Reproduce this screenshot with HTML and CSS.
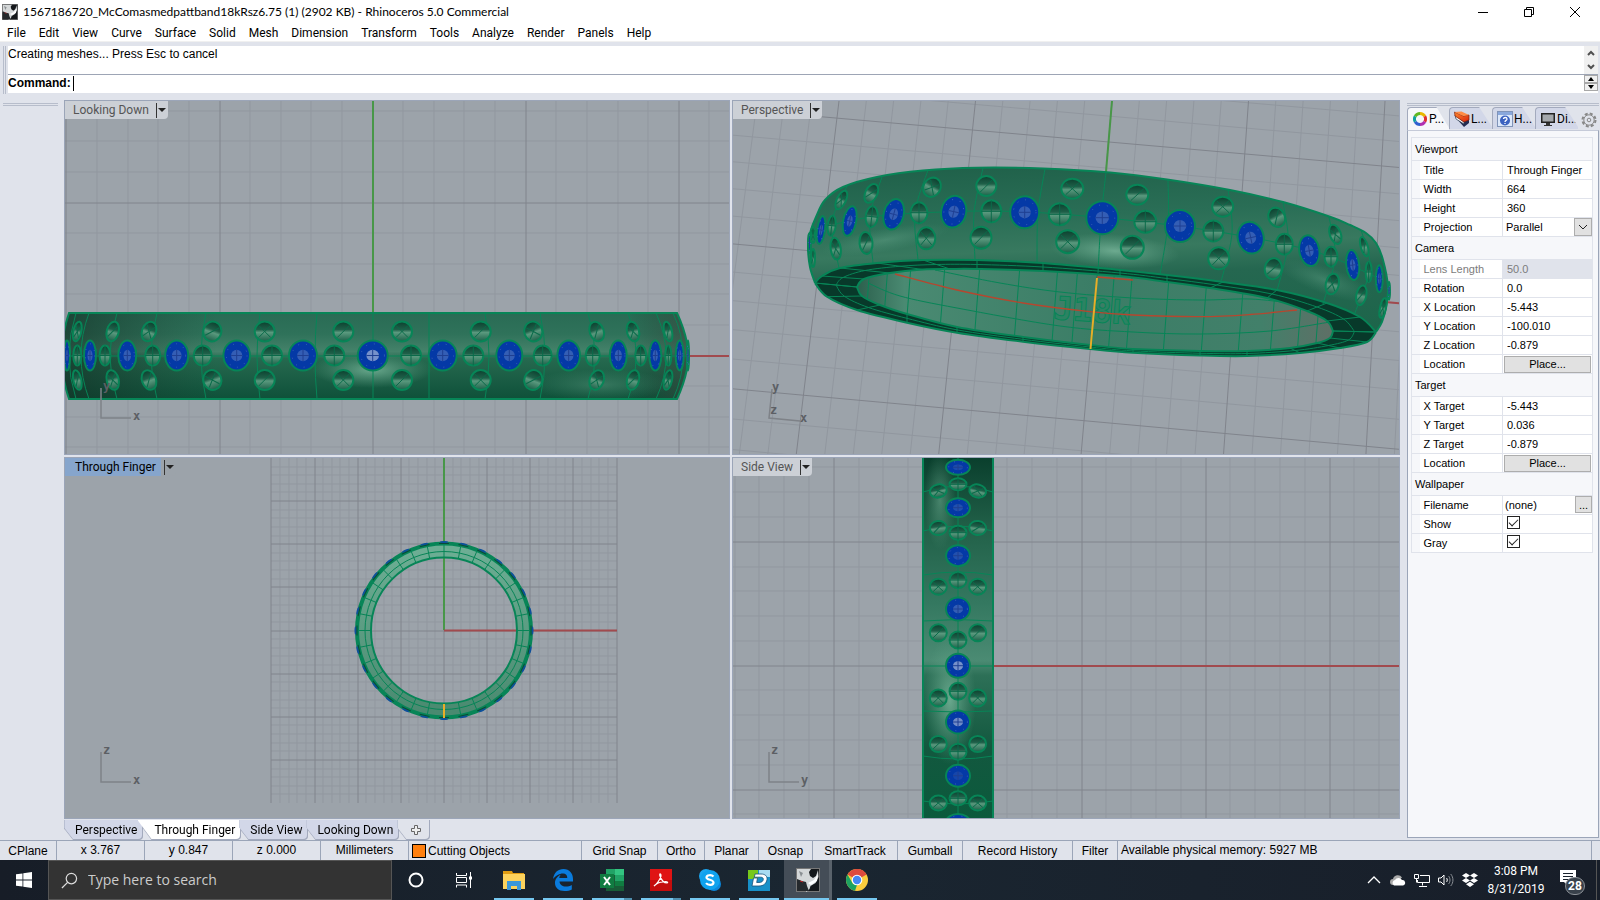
FILE: index.html
```html
<!DOCTYPE html>
<html lang="en">
<head>
<meta charset="utf-8">
<title>Rhinoceros 5.0 Commercial</title>
<link rel="stylesheet" href="styles.css">
</head>
<body>
<svg class="defs" width="0" height="0" aria-hidden="true">
  <defs>
    <linearGradient id="hole" x1="0" y1="0" x2="0" y2="1">
      <stop offset="0" stop-color="#0c3f2e"/><stop offset=".4" stop-color="#1f6049"/><stop offset=".55" stop-color="#5a997e"/><stop offset="1" stop-color="#1c6048"/>
    </linearGradient>
    <linearGradient id="band" x1="0" y1="0" x2="0" y2="1">
      <stop offset="0" stop-color="#296b54"/><stop offset=".25" stop-color="#2f725a"/><stop offset=".45" stop-color="#45826a"/><stop offset=".53" stop-color="#26694f"/><stop offset="1" stop-color="#0e5039"/>
    </linearGradient>
    <linearGradient id="ends" x1="0" y1="0" x2="1" y2="0">
      <stop offset="0" stop-color="#122820" stop-opacity=".6"/><stop offset=".25" stop-color="#17382c" stop-opacity="0"/><stop offset=".9" stop-color="#17382c" stop-opacity="0"/><stop offset="1" stop-color="#40453e" stop-opacity=".6"/>
    </linearGradient>
    <radialGradient id="glow"><stop offset="0" stop-color="#76b398" stop-opacity=".85"/><stop offset="1" stop-color="#5d9f84" stop-opacity="0"/></radialGradient>
    <linearGradient id="side" x1="0" y1="0" x2="0" y2="1">
      <stop offset="0" stop-color="#0a3f2d"/><stop offset=".2" stop-color="#226149"/><stop offset=".4" stop-color="#347860"/><stop offset=".56" stop-color="#4b8b73"/><stop offset=".6" stop-color="#2d7057"/><stop offset=".8" stop-color="#13583f"/><stop offset="1" stop-color="#0b5a3c"/>
    </linearGradient>
    <linearGradient id="ring" x1="0" y1="0" x2="0" y2="1"><stop offset="0" stop-color="#6dae94"/><stop offset="1" stop-color="#4a8a70"/></linearGradient>
    <linearGradient id="outer" x1="0" y1="0" x2=".12" y2="1">
      <stop offset="0" stop-color="#1f6049"/><stop offset=".3" stop-color="#2a6e56"/><stop offset=".48" stop-color="#38795f"/><stop offset=".62" stop-color="#256750"/><stop offset="1" stop-color="#1c654a"/>
    </linearGradient>
    <linearGradient id="inner" x1="0" y1="0" x2="1" y2="0">
      <stop offset="0" stop-color="#2c604d"/><stop offset=".1" stop-color="#4a8a72"/><stop offset=".5" stop-color="#3b7d66"/><stop offset=".85" stop-color="#42806a"/><stop offset="1" stop-color="#5f6f66"/>
    </linearGradient>
    <linearGradient id="cone" x1="0" y1="0" x2="1" y2="1"><stop offset="0" stop-color="#ff8a30"/><stop offset="1" stop-color="#d8230c"/></linearGradient>
  </defs>
  <symbol id="rhino" viewBox="0 0 24 24">
    <rect width="24" height="24" fill="#15181b"/><rect x=".5" y=".5" width="23" height="23" fill="none" stroke="#777"/>
    <path d="M1 1h14l-2 3 1 4 3 2 3-2 2-6 .5 7-3 6-5 3-1 3-3 3-3-5-4-3-2.500-4z" fill="#d4d7d8"/>
    <path d="M1 11l5 2 4 1 1 4 2 5H1z" fill="#25292c"/><path d="M3 3l4 2-2 4z" fill="#8b9093"/><path d="M12 15l6-3 4-6-1 7-6 4z" fill="#fff"/><path d="M4 13l3 1" stroke="#b22"/>
  </symbol>
</svg>

<header class="titlebar">
  <svg class="app-icon" viewBox="0 0 24 24"><use href="#rhino"/></svg>
  <h1>1567186720_McComasmedpattband18kRsz6.75 (1) (2902 KB) - Rhinoceros 5.0 Commercial</h1>
  <div class="window-buttons">
    <button aria-label="Minimize"><svg viewBox="0 0 12 12"><path d="M1 6.500h10"/></svg></button>
    <button aria-label="Restore"><svg viewBox="0 0 12 12"><path d="M1.500 3.500h7v7h-7zM3.500 3.500v-2h7v7h-2"/></svg></button>
    <button aria-label="Close"><svg viewBox="0 0 12 12"><path d="M1 1l10 10M11 1L1 11"/></svg></button>
  </div>
</header>
<nav class="menu" aria-label="Main menu">
  <button>File</button><button>Edit</button><button>View</button><button>Curve</button><button>Surface</button><button>Solid</button><button>Mesh</button><button>Dimension</button><button>Transform</button><button>Tools</button><button>Analyze</button><button>Render</button><button>Panels</button><button>Help</button>
</nav>

<section class="command">
  <div class="grip-v"></div>
  <div class="command-body">
    <div class="history"><p>Creating meshes... Press Esc to cancel</p>
      <div class="scroll"><button aria-label="Scroll up"><svg viewBox="0 0 8 6"><path d="M1 5l3-3 3 3"/></svg></button><button aria-label="Scroll down"><svg viewBox="0 0 8 6"><path d="M1 1l3 3 3-3"/></svg></button></div>
    </div>
    <div class="prompt"><label for="cmd">Command:</label><span class="caret"></span><input id="cmd" type="text">
      <div class="spin"><button aria-label="Previous"><svg viewBox="0 0 8 6"><path d="M1 5l3-4 3 4z"/></svg></button><button aria-label="Next"><svg viewBox="0 0 8 6"><path d="M1 1l3 4 3-4z"/></svg></button></div>
    </div>
  </div>
</section>

<main class="workspace">
  <aside class="toolbox"><div class="grip-h"></div></aside>
  <div class="center">
    <div class="views">
      <section class="view"><svg id="v-top" class="scene" viewBox="65 101 664 353" preserveAspectRatio="xMinYMin slice"></svg>
        <button class="view-title">Looking Down<i></i><b></b></button></section>
      <section class="view"><svg id="v-persp" class="scene" viewBox="733 101 666 353" preserveAspectRatio="xMinYMin slice"></svg>
        <button class="view-title">Perspective<i></i><b></b></button></section>
      <section class="view"><svg id="v-front" class="scene" viewBox="65 458 664 360" preserveAspectRatio="xMinYMin slice"></svg>
        <button class="view-title active"><span>Through Finger</span><i></i><b></b></button></section>
      <section class="view"><svg id="v-side" class="scene" viewBox="733 458 666 360" preserveAspectRatio="xMinYMin slice"></svg>
        <button class="view-title">Side View<i></i><b></b></button></section>
    </div>
    <div class="view-tabs">
      <button>Perspective</button><button class="current">Through Finger</button><button>Side View</button><button>Looking Down</button><button class="add" aria-label="New viewport"><svg viewBox="0 0 10 10"><path d="M3.500 .5h3v3h3v3h-3v3h-3v-3h-3v-3h3z"/></svg></button>
    </div>
  </div>
  <aside class="side">
    <div class="grip-h"></div>
    <div class="panel-tabs">
      <button class="current"><svg viewBox="0 0 16 16" fill="none" stroke-width="3"><path d="M8 2.500a5.500 5.500 0 0 1 4.800 2.800" stroke="#e8b800"/><path d="M12.800 5.300a5.500 5.500 0 0 1 0 5.400" stroke="#e03030"/><path d="M12.800 10.700A5.500 5.500 0 0 1 8 13.500" stroke="#b030b0"/><path d="M8 13.500a5.500 5.500 0 0 1-4.800-2.800" stroke="#3060d0"/><path d="M3.200 10.700a5.500 5.500 0 0 1 0-5.400" stroke="#10a0a0"/><path d="M3.200 5.300A5.500 5.500 0 0 1 8 2.500" stroke="#60b820"/></svg>P...</button>
      <button><svg viewBox="0 0 16 16"><path d="M1 6l9 10 5-4V6l-5 3z" fill="#232c52"/><path d="M1 4l9 7v2L2 8z" fill="#fff" stroke="#345" stroke-width=".7"/><path d="M.5 1l9 4 5.500-1v5l-5 2-9-6z" fill="url(#cone)" stroke="#7b2010" stroke-width=".7"/><path d="M.5 1l7-.5L15 4l-5.500 1z" fill="#ff8b45"/></svg>L...</button>
      <button><svg viewBox="0 0 16 16"><rect x=".5" y=".5" width="15" height="15" fill="#dce8fa" stroke="#8094b8"/><path d="M1 1h14v3H1z" fill="#8aa8dc"/><circle cx="8" cy="9.500" r="5" fill="#3b62c0"/><path d="M6.500 8c0-2 3.500-2 3.500 0 0 1.500-2 1.200-2 3M8 12v1" stroke="#fff" stroke-width="1.300" fill="none"/></svg>H...</button>
      <button><svg viewBox="0 0 16 16"><rect x="1" y="2" width="14" height="10" fill="#222"/><rect x="2.500" y="3.500" width="11" height="7" fill="#a4a8ac"/><path d="M6 12h4v2h2v1H4v-1h2z" fill="#333"/></svg>Di...</button>
      <button class="gear" aria-label="Panel options"><svg viewBox="0 0 16 16" fill="none" stroke="#888"><circle cx="8" cy="8" r="6.500" stroke-width="2" stroke-dasharray="3 2.100"/><circle cx="8" cy="8" r="5.200"/><circle cx="8" cy="8" r="1.800"/></svg></button>
    </div>
    <div class="panel">
      <table class="props">
        <colgroup><col class="c-gutter"><col class="c-label"><col></colgroup>
        <tbody>
        <tr class="group"><th colspan="3" scope="rowgroup">Viewport</th></tr>
        <tr><td></td><th><label for="p1">Title</label></th><td><input id="p1" value="Through Finger"></td></tr>
        <tr><td></td><th><label for="p2">Width</label></th><td><input id="p2" value="664"></td></tr>
        <tr><td></td><th><label for="p3">Height</label></th><td><input id="p3" value="360"></td></tr>
        <tr><td></td><th><label for="p4">Projection</label></th><td><div class="drop"><select id="p4"><option>Parallel</option></select><svg viewBox="0 0 10 6"><path d="M1 1l4 4 4-4"/></svg></div></td></tr>
        </tbody><tbody>
        <tr class="group"><th colspan="3" scope="rowgroup">Camera</th></tr>
        <tr class="off"><td></td><th><label for="p5">Lens Length</label></th><td><input id="p5" value="50.0" disabled></td></tr>
        <tr><td></td><th><label for="p6">Rotation</label></th><td><input id="p6" value="0.0"></td></tr>
        <tr><td></td><th><label for="p7">X Location</label></th><td><input id="p7" value="-5.443"></td></tr>
        <tr><td></td><th><label for="p8">Y Location</label></th><td><input id="p8" value="-100.010"></td></tr>
        <tr><td></td><th><label for="p9">Z Location</label></th><td><input id="p9" value="-0.879"></td></tr>
        <tr><td></td><th><label for="p10">Location</label></th><td><button id="p10" class="place">Place...</button></td></tr>
        </tbody><tbody>
        <tr class="group"><th colspan="3" scope="rowgroup">Target</th></tr>
        <tr><td></td><th><label for="p11">X Target</label></th><td><input id="p11" value="-5.443"></td></tr>
        <tr><td></td><th><label for="p12">Y Target</label></th><td><input id="p12" value="0.036"></td></tr>
        <tr><td></td><th><label for="p13">Z Target</label></th><td><input id="p13" value="-0.879"></td></tr>
        <tr><td></td><th><label for="p14">Location</label></th><td><button id="p14" class="place">Place...</button></td></tr>
        </tbody><tbody>
        <tr class="group"><th colspan="3" scope="rowgroup">Wallpaper</th></tr>
        <tr><td></td><th><label for="p15">Filename</label></th><td><div class="file"><input id="p15" value="(none)"><button aria-label="Browse">...</button></div></td></tr>
        <tr><td></td><th><label for="p16">Show</label></th><td><input id="p16" type="checkbox" checked></td></tr>
        <tr><td></td><th><label for="p17">Gray</label></th><td><input id="p17" type="checkbox" checked></td></tr>
        </tbody>
      </table>
    </div>
  </aside>
</main>

<footer class="status">
  <button>CPlane</button><span>x 3.767</span><span>y 0.847</span><span>z 0.000</span><span>Millimeters</span>
  <button class="layer"><i></i>Cutting Objects</button>
  <button>Grid Snap</button><button>Ortho</button><button>Planar</button><button>Osnap</button><button>SmartTrack</button><button>Gumball</button><button>Record History</button><button>Filter</button>
  <span class="memory">Available physical memory: 5927 MB</span><span></span>
</footer>

<div class="taskbar">
  <button class="start" aria-label="Start"><svg viewBox="0 0 16 16" fill="#fff"><path d="M0 2.300l6.500-.9v6.200H0zM7.300 1.300L16 0v7.600H7.300zM0 8.400h6.500v6.200L0 13.700zM7.300 8.400H16V16l-8.700-1.300z"/></svg></button>
  <label class="search"><svg viewBox="0 0 18 18"><circle cx="11" cy="7" r="5.500"/><path d="M7 11l-6 6"/></svg><input type="text" placeholder="Type here to search" aria-label="Search"></label>
  <div class="apps">
    <button aria-label="Cortana"><svg viewBox="0 0 24 24"><circle cx="12" cy="12" r="6.500" fill="none" stroke="#fff" stroke-width="2"/></svg></button>
    <button aria-label="Task View"><svg viewBox="0 0 24 24" fill="none" stroke="#fff"><path d="M3.500 5v2.500h10V5M3.500 19.500V17h10v2.500M3.500 9.500h10v5h-10zM17.500 4v16"/><path d="M16 8.500h3v3h-3z" fill="#fff" stroke="none"/></svg></button>
    <button class="open" aria-label="File Explorer"><svg viewBox="0 0 24 24"><path d="M1 3h9l1 2h11v4H1z" fill="#e09c12"/><path d="M1 6h22v15H1z" fill="#fcd25c"/><path d="M5 22v-9h14v9h-4v-4H9v4z" fill="#3b97d9"/></svg></button>
    <button class="open" aria-label="Edge"><svg viewBox="0 0 24 24"><path fill="#0a7bdc" d="M2 11C3 4.500 7 1 12.500 1 18.500 1 22 5.500 22 11v2.500H8.500c.3 3.500 3 5 6.200 5 2.300 0 4.300-.6 6.100-1.600v4.500C19 22.500 16.500 23 13.500 23 7.500 23 4 19.500 4 15c0-4 2.500-6.800 5.800-8.200C8.800 7.800 8.400 9 8.300 10h8c0-2.900-1.500-4.500-4.200-4.500C8 5.500 4.200 8 2 11z"/></svg></button>
    <button class="open multi" aria-label="Excel"><svg viewBox="0 0 24 24"><path d="M6 1h18v22H6z" fill="#185c37"/><path d="M6 1h9v6H6z" fill="#21a366"/><path d="M15 1h9v6h-9z" fill="#33c481"/><path d="M15 7h9v6h-9z" fill="#21a366"/><path d="M15 13h9v5h-9z" fill="#107c41"/><rect y="6" width="14" height="14" fill="#107c41"/><path d="M4 9l6 8M10 9l-6 8" stroke="#fff" stroke-width="2"/></svg></button>
    <button class="open multi" aria-label="Acrobat"><svg viewBox="0 0 24 24"><rect x="1" y="1" width="22" height="22" fill="#c40d0d"/><path d="M1 1h22v11H1z" fill="#e01414"/><path d="M5 18c2-1 6-6 7-10 0-3-2-3-1 0 1 4 4 7 7 7 2-1-1-2-4-1-3 0-7 2-9 4z" fill="none" stroke="#fff" stroke-width="1.200"/></svg></button>
    <button class="open" aria-label="Skype"><svg viewBox="0 0 24 24"><circle cx="8" cy="8" r="7" fill="#1aa5f0"/><circle cx="16" cy="16" r="7" fill="#0a87dc"/><circle cx="12" cy="12" r="10" fill="#0fa2ee"/><path d="M15.500 8.500c-2-2-7-1.600-7 1s7 2 7 5-5.500 3-7.500.6" fill="none" stroke="#fff" stroke-width="2.200"/></svg></button>
    <button class="open" aria-label="Design app"><svg viewBox="0 0 24 24"><rect x="1" y="2" width="22" height="21" fill="#1790c8"/><path d="M1 2h10v9H1z" fill="#77c91c"/><path d="M12 2h11v7H12z" fill="#a8dcf2"/><path fill-rule="evenodd" d="M8 6h6c4 0 6.500 2 6 5.500-.6 4-3.500 6.500-8 6.500H5l1.500-8h4L9.700 14.500H12c2.500 0 4-1 4.300-3 .2-1.500-.8-2.300-3-2.300H7.400z" fill="#fff" stroke="#16527a" stroke-width=".8"/></svg></button>
    <button class="open focus" aria-label="Rhinoceros"><svg viewBox="0 0 24 24"><use href="#rhino"/></svg></button>
    <button class="open" aria-label="Chrome"><svg viewBox="0 0 24 24"><circle cx="12" cy="12" r="11" fill="#fbcd3d"/><path d="M12 12L2.500 6.500A11 11 0 0 1 21.500 6.500z" fill="#dd4b3e"/><path d="M12 1a11 11 0 0 1 9.500 6H12z" fill="#dd4b3e"/><path d="M2.500 6.500L8 16l4 1-2 5.800A11 11 0 0 1 2.500 6.500z" fill="#1da261"/><circle cx="12" cy="12" r="5.300" fill="#fff"/><circle cx="12" cy="12" r="4.200" fill="#4587f3"/></svg></button>
  </div>
  <div class="tray">
    <svg viewBox="0 0 16 16"><path d="M2 11l6-6 6 6" fill="none" stroke="#fff" stroke-width="1.300"/></svg>
    <svg viewBox="0 0 16 16"><path d="M3 13a3 3 0 0 1 0-6 5 5 0 0 1 9-1.500z" fill="#aaa"/><path d="M4 13.500a3 3 0 0 1 1-5.500 4 4 0 0 1 7 0 2.800 2.800 0 0 1 1 5.500z" fill="#fff"/></svg>
    <svg viewBox="0 0 16 16" fill="none" stroke="#fff"><path d="M6 3.500h9.500v7H3.500V8M8.500 10.500v3M5 14.500h8M.5 2.500h4v4h-4zM2.500 6.500v4"/></svg>
    <svg viewBox="0 0 16 16" fill="none" stroke="#fff"><path d="M.5 6h2.500l3-3v10l-3-3H.5zM8.500 6c1 1 1 3 0 4"/><path d="M10.500 4c2 2 2 6 0 8M12.700 2c3 3.500 3 8.500 0 12" stroke="#8b9096"/></svg>
    <svg viewBox="0 0 16 16" fill="#fff"><path d="M4 1l4 2.500L4 6 0 3.500zM12 1l4 2.500L12 6 8 3.500zM4 6l4 2.500L4 11 0 8.500zM12 6l4 2.500L12 11 8 8.500zM8 9.800l4 2.400L8 15l-4-2.800z"/></svg>
    <time><span>3:08 PM</span><span>8/31/2019</span></time>
    <button class="notify" aria-label="Notifications"><svg viewBox="0 0 18 18"><path d="M1 1h16v12H8v3l-3-3H1z" fill="#fff"/><path d="M4 4.500h10M4 7.500h10M4 10.500h6" stroke="#1a222d"/></svg><span>28</span></button>
  </div>
</div>
<script src="scene.js"></script>
</body>
</html>
```
FILE: styles.css
```css
* { box-sizing: border-box; }
body { margin: 0; min-height: 100vh; display: flex; flex-direction: column; background: #e0e3eb; color: #000; font: 12px/16px Roboto, "Noto Sans", sans-serif; }
button, input, select { font: inherit; color: inherit; background: none; border: 0; padding: 0; margin: 0; }
.defs { position: absolute; }

.titlebar { display: flex; align-items: center; height: 23px; background: #fff; padding-left: 2px; gap: 5px; }
.titlebar h1 { margin: 0; font: 12px/16px Lato, Roboto, sans-serif; white-space: nowrap; }
.app-icon { width: 16px; height: 16px; }
.window-buttons { margin-left: auto; display: flex; padding-right: 2px; }
.window-buttons button { width: 46px; height: 20px; display: grid; place-items: center; }
.window-buttons svg { width: 12px; height: 12px; fill: none; stroke: #000; }
.menu { display: flex; gap: 13px; height: 19px; padding: 1px 7px 0; background: #fff; border-bottom: 1px solid #f0f0f0; }

.command { display: flex; height: 58px; padding: 4px 2px 7px 3px; gap: 2px; }
.grip-v { width: 3px; height: 48px; border: solid #b7bdcb; border-width: 0 1px; }
.command-body { flex: 1; background: #fff; font: 12px/16px "Liberation Sans", Arial, sans-serif; }
.history { display: flex; justify-content: space-between; height: 29px; border-bottom: 1px solid #9da5b5; }
.history p { margin: 0; }
.scroll, .spin { width: 14px; display: grid; background: #f0f0f0; }
.scroll button, .spin button { display: grid; place-items: center; }
.scroll svg, .spin svg { width: 8px; height: 6px; }
.scroll path { fill: none; stroke: #505050; stroke-width: 2; }
.spin button { border: 1px solid #a8a8a8; }
.prompt { display: flex; align-items: center; height: 16px; }
.prompt label { font-weight: 700; }
.caret { width: 1px; height: 15px; margin-left: 2px; background: #000; }
.prompt input { flex: 1; outline: 0; }

.workspace { flex: 1; display: grid; grid-template-columns: 64px 1fr 200px; min-height: 0; }
.grip-h { height: 3px; border: solid #b7bdcb; border-width: 1px 0; }
.toolbox { padding: 3px 6px 0 3px; }
.center { display: flex; flex-direction: column; min-width: 0; }
.views { flex: 1; display: grid; grid-template-columns: 666fr 668fr; grid-template-rows: 355fr 362fr; gap: 2px; min-height: 0; }
.view { position: relative; overflow: hidden; border: 1px solid #9ba5b8; background: #9ca3aa; }
.scene { position: absolute; inset: 0; width: 100%; height: 100%; }
.view-title { position: absolute; left: 0; top: 0; display: flex; align-items: center; height: 18px; padding: 0 2px 0 8px; background: #ccd0d6; color: #555; border-radius: 0 0 4px 0; }
.view-title i { width: 1px; height: 15px; margin: 0 1px 0 7px; background: #333; }
.view-title b { border: 4px solid transparent; border-top-color: #222; border-bottom: 0; }
.view-title.active { padding-left: 0; background: #9ca3aa; color: #000; }
.view-title.active span { padding: 1px 5px 1px 10px; background: #86a5cc; }
.view-title.active i { margin-left: 3px; }

.view-tabs { display: flex; height: 21px; padding-top: 1px; filter: drop-shadow(0 1px 0 #a3aabd) drop-shadow(1px 0 0 #a3aabd); }
.view-tabs button { height: 19px; padding: 0 5px 0 10px; background: #d2d7e8; border-left: 1px solid #b8bfd2; border-radius: 0 0 4px 0; clip-path: polygon(0 0, 100% 0, 100% 100%, 9px 100%, 0 40%); }
.view-tabs button + button { margin-left: -1px; }
.view-tabs .current { padding-left: 16px; margin-left: -5px !important; background: #fff; clip-path: polygon(0 0, 100% 0, 100% 100%, 14px 100%); }
.view-tabs .add { width: 32px; background: #e0e3eb; display: grid; place-items: center; }
.view-tabs svg { width: 10px; height: 10px; fill: #eee; stroke: #666; }

.side { display: flex; flex-direction: column; padding: 3px 1px 2px 7px; }
.panel-tabs { display: flex; height: 23px; margin-top: 1px; }
.panel-tabs button { flex: 0 0 43px; height: 22px; display: flex; align-items: center; gap: 1px; padding-left: 4px; white-space: nowrap; background: #d2d7e8; border: solid #a3aabd; border-width: 1px 0 0 1px; border-radius: 4px 0 0 0; clip-path: polygon(0 0, 70% 0, 100% 90%, 100% 100%, 0 100%); }
.panel-tabs .current { background: #f6f7fa; height: 23px; flex-basis: 42px; }
.panel-tabs svg { width: 16px; height: 16px; flex: none; }
.panel-tabs .gear { flex: 1; border: 0; padding: 4px 0 0; background: none; clip-path: none; justify-content: center; }
.panel { flex: 1; padding: 6px 5px 0 3px; background: #f6f7fa; border: 1px solid #9ba5b8; border-top-color: #c5cad8; }
.props { width: 100%; table-layout: fixed; border-collapse: collapse; border: 1px solid #e0e3eb; font: 11px/16px "Liberation Sans", Arial, sans-serif; }
.props td, .props th { height: 19px; padding: 0; font-weight: 400; text-align: left; border-bottom: 1px solid #e0e3eb; background: #fff; }
.props td:first-child { background: #f6f7fa; }
.props td + th { padding-left: 4px; border-right: 1px solid #e0e3eb; }
.props .group th { height: 23px; padding-left: 3px; background: #f6f7fa; }
.c-gutter { width: 8px; }
.c-label { width: 83px; }
.props input:not([type]) { display: block; width: 100%; height: 18px; padding-left: 4px; }
.props .off th, .props .off input { color: #7c7c7c; }
.props .off input { background: #e0e3eb; }
.drop { display: flex; position: relative; height: 18px; }
.drop select { flex: 1; appearance: none; padding-left: 3px; }
.drop svg { width: 18px; height: 18px; padding: 5px 3px; background: #e1e1e1; border: 1px solid #adadad; position: absolute; right: 0; pointer-events: none; fill: none; stroke: #222; }
.place { display: block; width: 87px; height: 17px; margin-left: 1px; background: #e1e1e1; border: 1px solid #adadad; line-height: 14px; }
.file { display: flex; }
.props .file input { flex: 1; min-width: 0; padding-left: 2px; }
.file button { width: 17px; height: 17px; background: #e1e1e1; border: 1px solid #adadad; line-height: 14px; }
.props [type=checkbox] { appearance: none; display: block; width: 13px; height: 13px; margin: 0 0 3px 4px; border: 1px solid #222; background: #fff; }
.props [type=checkbox]:checked::after { content: ""; display: block; width: 8px; height: 4px; margin: 2px 0 0 1px; border: solid #222; border-width: 0 0 1px 1px; transform: rotate(-45deg); }

.status { display: grid; grid-template-columns: 57px 88px 88px 88px 88px 173px 76px 47px 54px 54px 85px 65px 110px 45px 1fr 8px; height: 20px; border-top: 1px solid #9ba5b8; font: 12px/18px "Liberation Sans", Arial, sans-serif; text-align: center; }
.status > * { border-right: 1px solid #9ba5b8; white-space: nowrap; }
.status > :last-child { border: 0; }
.status .layer { display: flex; align-items: center; gap: 2px; padding-left: 3px; }
.layer i { width: 14px; height: 14px; background: #ff7f0e; border: 1px solid #000; }
.status .memory { text-align: left; padding-left: 3px; }

.taskbar { display: flex; height: 40px; background: linear-gradient(90deg, #171d27, #1a2631 50%, #181e29); color: #fff; }
.start { width: 48px; display: grid; place-items: center; }
.start svg { width: 16px; height: 16px; }
.search { width: 344px; display: flex; align-items: center; gap: 10px; padding-left: 12px; background: #333; border: 1px solid #555; }
.search svg { width: 17px; height: 17px; fill: none; stroke: #ddd; stroke-width: 1.300; }
.search input { flex: 1; font: 14px/20px "Open Sans", "Noto Sans", sans-serif; outline: 0; }
.search input::placeholder { color: #ccc; opacity: 1; }
.apps { display: flex; gap: 1px; }
.apps button { width: 48px; display: grid; place-items: center; position: relative; }
.apps svg { width: 24px; height: 24px; }
.apps .open::after { content: ""; position: absolute; left: 4px; right: 4px; bottom: 0; height: 2px; background: #76c8f0; }
.apps .multi::after { background: linear-gradient(90deg, #76c8f0 32px, #4f8fae 32px); }
.apps .focus { background: #444d57; border-right: 3px solid #59626b; }
.apps .focus::after { left: 0; right: 0; }
.apps .focus svg { justify-self: end; margin-right: 9px; }
.tray { display: flex; align-items: center; margin-left: auto; gap: 8px; border-right: 1px solid #555; margin-right: 3px; }
.tray > svg { width: 16px; height: 16px; }
.tray time { display: grid; width: 60px; line-height: 18px; text-align: center; white-space: nowrap; }
.notify { position: relative; width: 40px; height: 32px; margin-right: 2px; }
.notify svg { position: absolute; left: 5px; top: 5px; width: 18px; height: 18px; }
.notify span { position: absolute; left: 11px; top: 13px; width: 20px; height: 18px; line-height: 16px; font-weight: 700; font-size: 12px; background: #39414b; border: 1px solid #8b9096; border-radius: 9px; }

.scene .minor { stroke: #91979f; stroke-width: 1; }
.scene .major { stroke: #80848c; stroke-width: 1; }
.scene .xaxis { stroke: #a14a4e; stroke-width: 2; }
.scene .yaxis { stroke: #489748; stroke-width: 2; }
.scene .wire { fill: none; stroke: #078557; stroke-width: 1; }
.scene .edge { fill: none; stroke: #078557; stroke-width: 2; }
.scene .gem { fill: #0439a6; stroke: #078557; stroke-width: 2; }
.scene .table { fill: #7d96cc; }
.scene .cut { fill: none; stroke: #1f3f92; stroke-width: 1; }
.scene .fleck { fill: none; stroke: #3c62b8; stroke-width: 1; stroke-dasharray: 1 7; }
.scene .hole { fill: url(#hole); stroke: #078557; stroke-width: 2; }
.scene .shade { fill: none; stroke: #0a6b4a; stroke-width: 1; }
.scene .icon-axis { fill: none; stroke: #7e8288; stroke-width: 1.500; }
.scene .axis-name { font: 700 12px "DejaVu Sans Mono", monospace; fill: #5c5f64; }
.scene .red { fill: none; stroke: #b5472f; stroke-width: 1.300; }
.scene .gold { fill: none; stroke: #e8ae28; stroke-width: 2; }
.scene .stamp { font: 700 32px "DejaVu Sans Mono", monospace; fill: #2c8363; stroke: #078557; stroke-width: 1; }
```
FILE: scene.js
```js
const line = (x1, y1, x2, y2, c) => `<line x1="${x1}" y1="${y1}" x2="${x2}" y2="${y2}" class="${c}"/>`;
const path = (d, c, extra = '') => `<path d="${d}" class="${c}" ${extra}/>`;
const put = (id, parts) => { document.getElementById(id).innerHTML = parts.join(''); };

function gem([x, y, rx, ry, r = 0], light = 0.4) {
  const ix = rx * 0.42, iy = ry * 0.38;
  return `<g transform="rotate(${r} ${x} ${y})"><ellipse cx="${x}" cy="${y}" rx="${rx}" ry="${ry}" class="gem"/>
    <ellipse cx="${x}" cy="${y}" rx="${rx * 0.78}" ry="${ry * 0.78}" class="fleck"/>
    <ellipse cx="${x}" cy="${y}" rx="${ix}" ry="${iy}" class="table" fill-opacity="${light}"/>
    <path d="M${x - ix} ${y}H${x + ix}M${x} ${y - iy}V${y + iy}" class="cut"/></g>`;
}
function hole([x, y, rx, ry, r = 0], i = 0) {
  const a = rx * 0.6, b = ry * 0.6;
  const marks = [`M${x - a} ${y - b}L${x + a} ${y + b}M${x - a} ${y + b}L${x + a} ${y - b}`, `M${x - rx} ${y}H${x + rx}M${x} ${y - ry}V${y + ry}`, `M${x - a} ${y + b}L${x + a} ${y - b}`];
  return `<g transform="rotate(${r} ${x} ${y})"><ellipse cx="${x}" cy="${y}" rx="${rx}" ry="${ry}" class="hole"/>${path(marks[i], 'shade')}</g>`;
}
function grid(cx, cy, step, x0, x1, y0, y1, out) {
  const sets = { minor: [], major: [] };
  for (let k = Math.ceil((x0 - cx) / step); cx + k * step <= x1; k++) { const x = Math.round(cx + k * step); sets[k % 5 ? 'minor' : 'major'].push(line(x, y0, x, y1, k % 5 ? 'minor' : 'major')); }
  for (let k = Math.ceil((y0 - cy) / step); cy + k * step <= y1; k++) { const y = Math.round(cy + k * step); sets[k % 5 ? 'minor' : 'major'].push(line(x0, y, x1, y, k % 5 ? 'minor' : 'major')); }
  out.push(...sets.minor, ...sets.major);
}
const axes = (x, y, a, b) => path(`M${x} ${y - 30}V${y}H${x + 30}`, 'icon-axis') + `<text x="${x + 2}" y="${y - 28}" class="axis-name">${a}</text><text x="${x + 32}" y="${y + 2}" class="axis-name">${b}</text>`;

/* Looking Down */
{
  const o = [];
  grid(372.6, 355.6, 30.62, 65, 731, 101, 455, o);
  o.push(line(373, 101, 373, 312, 'yaxis'), line(680, 356, 731, 356, 'xaxis'));
  const body = 'M69 313H677Q684 328 687 343V369Q684 384 677 399H69Q62 378 61 356Q62 334 69 313Z';
  o.push(`<clipPath id="cb"><path d="${body}"/></clipPath><g clip-path="url(#cb)"><rect x="60" y="312" width="630" height="88" fill="url(#band)"/><rect x="60" y="312" width="630" height="88" fill="url(#ends)"/><ellipse cx="372" cy="370" rx="60" ry="18" fill="url(#glow)"/><ellipse cx="600" cy="385" rx="70" ry="16" fill="url(#glow)" opacity=".4"/></g>`);
  [[76, 69], [89, 81], [117, 110], [157, 151], [206, 201], [260, 257], [317, 315], [373, 373], [429, 429], [485, 489], [540, 545], [588, 595], [628, 636], [656, 666], [673, 683]].forEach(([a, b]) => o.push(path(`M${a} 313Q${2 * b - a} 356 ${a} 399`, 'wire')));
  o.push(path('M65 356H686', 'wire'), path(body, 'edge'));
  [[67, 3], [90, 6], [127.3, 9], [176.7, 11.5], [236.7, 13.3], [303, 14], [372.7, 15], [442.7, 14], [509.3, 13], [568.7, 11.3], [618.3, 8.500], [655.3, 6], [679.7, 4], [688, 1]].forEach(([x, r]) => o.push(gem([x, 355.500, r, 15], x > 370 && x < 376 ? 0.95 : 0.4)));
  [[77.3, 4], [105, 5.500], [152.7, 7.500], [202.7, 9], [272, 10], [334.3, 10], [411, 10], [473.3, 10], [542.7, 9], [592.7, 7], [640.7, 5.500], [668.3, 3]].forEach(([x, r]) => o.push(hole([x, 355.500, r, 10], 1)));
  [[77.3, 4, 12], [112.7, 6, 14], [149, 7, 20], [212.3, 9, 20], [264.7, 10, 0], [343.3, 10, 0], [402, 10, 0], [480.7, 10, 0], [533.3, 9, -20], [596.7, 7, -20], [633, 6, -14], [668, 4, -12]].forEach(([x, r, t], i) => { o.push(hole([x, 331.500, r, 10, t], i % 2 * 2), hole([x, 380, r, 10, -t], (i + 1) % 2 * 2)); });
  o.push(axes(101, 418, 'y', 'x'));
  put('v-top', o);
}

/* Through Finger */
{
  const o = [], cx = 444, cy = 630.500;
  grid(cx, cy, 8.63, 271, 617, 458, 803, o);
  o.push(line(444, 458, 444, 630, 'yaxis'), line(444, 630.500, 617, 630.500, 'xaxis'));
  o.push(`<circle cx="${cx}" cy="${cy}" r="80.500" fill="none" stroke="url(#ring)" stroke-width="15"/><circle cx="${cx}" cy="${cy}" r="87" fill="none" stroke="#078557" stroke-width="4"/><circle cx="${cx}" cy="${cy}" r="73" class="edge"/><circle cx="${cx}" cy="${cy}" r="79" class="wire"/>`);
  for (let i = 0; i < 32; i++) {
    const a = i * Math.PI / 16, s = Math.sin(a), c = Math.cos(a);
    o.push(line(cx + 73 * s, cy - 73 * c, cx + 86 * s, cy - 86 * c, 'wire'));
  }
  for (let i = 0; i < 28; i++) {
    const a = i * 360 / 28;
    o.push(`<g transform="rotate(${a} ${cx} ${cy})"><ellipse cx="${cx}" cy="${cy - 88.500}" rx="4" ry="1" fill="#0d4f9c"/><path d="M${cx - 5} ${cy - 87}h10" stroke="#0a4a36"/></g>`);
  }
  o.push(line(444, 704, 444, 718, 'gold'), axes(101, 782, 'z', 'x'));
  put('v-front', o);
}

/* Side View */
{
  const o = [];
  grid(957.7, 665.7, 24.79, 733, 1401, 458, 819, o);
  o.push(line(994, 666, 1401, 666, 'xaxis'));
  o.push('<rect x="923" y="458" width="70" height="362" fill="url(#side)"/><ellipse cx="950" cy="700" rx="26" ry="65" fill="url(#glow)"/><ellipse cx="940" cy="500" rx="16" ry="50" fill="url(#glow)" opacity=".6"/>');
  [[492, 486], [531, 526], [575, 572], [621, 619.500], [666, 666], [711, 712], [756, 759], [801, 804]].forEach(([a, b]) => o.push(path(`M923 ${a}Q958 ${2 * b - a} 993 ${a}`, 'wire')));
  o.push(line(958, 458, 958, 820, 'wire'), line(923, 458, 923, 820, 'edge'), line(993, 458, 993, 820, 'edge'));
  [[467.3, 7.500, .2], [507.7, 9.500, .25], [555.7, 10.500, .25], [609, 11.500, .4], [665.7, 12, .95], [722, 11.500, .9], [775.7, 11, .15], [822, 8, .2]].forEach(([y, r, l]) => o.push(gem([958, y, 12, r], l)));
  [[484.3, 6], [532.7, 7], [580, 8], [640, 8.500], [691.3, 8.500], [751.7, 8], [798.3, 7]].forEach(([y, r]) => o.push(hole([958, y, 8.500, r], 1)));
  [[491, 6.500, 14], [528, 7, 8], [586.7, 8, 0], [632.7, 8.500, 0], [698, 8.500, 0], [744, 8, 0], [803, 7.500, 0]].forEach(([y, r, t], i) => o.push(hole([938.3, y, 8.500, r, -t], i % 2 * 2), hole([977.7, y, 8.500, r, t], i % 2 * 2)));
  o.push(axes(769, 782, 'z', 'y'));
  put('v-side', o);
}

/* Perspective */
{
  const o = [], minor = [], major = [];
  for (let k = -15; k <= 12; k++) {
    const t = 1112 + 27.3 * k, b = t + (1088.500 + 28.2 * k - t) * 353 / 268;
    (k % 5 ? minor : major).push(line(t, 101, b, 455, k % 5 ? 'minor' : 'major'));
  }
  for (let k = -11; k <= 8; k++) {
    const y = 249 + 28 * k + 0.2 * k * k, s = 0.0893 + 0.0003 * k;
    (k % 5 ? minor : major).push(line(733, y - 57 * s, 1401, y + 611 * s, k % 5 ? 'minor' : 'major'));
  }
  o.push(...minor, ...major, line(1112, 101, 1106, 172, 'yaxis'), line(1385, 302, 1401, 303.500, 'xaxis'));

  /* smooth curve through a list of points */
  const curve = (p, start = 'M') => p.reduce((d, q, i) => {
    if (!i) return start + q.join(' ');
    const a = p[i - 2] || p[i - 1], b = p[i - 1], e = p[i + 1] || q;
    return d + `C${b[0] + (q[0] - a[0]) / 6} ${b[1] + (q[1] - a[1]) / 6} ${q[0] - (e[0] - b[0]) / 6} ${q[1] - (e[1] - b[1]) / 6} ${q[0]} ${q[1]}`;
  }, '');
  const top = [[815, 283], [810, 267], [808, 247], [810, 233], [816, 217], [825, 200], [843, 187], [877, 177], [923, 170.5], [977, 167.7], [1043, 168.5], [1110, 172.5], [1167, 179.5], [1230, 190], [1283, 202], [1330, 216.7], [1350, 225], [1366, 233], [1376, 243], [1383, 260], [1388, 287], [1386, 307], [1382, 322], [1376, 332]];
  const low = [[1376, 332], [1367, 342], [1340, 348], [1300, 353], [1247, 356], [1200, 355.500], [1133, 352.700], [1090, 349], [1023, 341.700], [957, 332.700], [907, 322.700], [857, 310], [827, 296.700], [815, 283]];
  const front = [[815, 283], [822, 276], [840, 268], [877, 263], [923, 260], [977, 260], [1043, 263], [1120, 270], [1167, 275], [1223, 282], [1277, 290], [1327, 303], [1360, 317], [1376, 332]];
  const inTop = [[857, 287], [864, 279], [890, 273], [923, 269.500], [950, 269], [977, 269], [1043, 271], [1120, 276], [1167, 282], [1210, 288], [1267, 298], [1307, 311], [1327, 321], [1333, 331]];
  const inLow = [[1333, 331], [1330, 338], [1317, 343], [1290, 348], [1247, 351], [1200, 351], [1133, 349], [1090, 345], [1023, 337], [957, 327], [907, 314], [880, 305], [862, 296], [857, 287]];

  o.push(`<path d="${curve(top)}${curve(low, 'L')}Z" fill="url(#outer)"/>`);
  o.push('<ellipse cx="1115" cy="251" rx="65" ry="17" fill="url(#glow)" transform="rotate(4 1115 251)"/><ellipse cx="1325" cy="280" rx="50" ry="14" fill="url(#glow)" opacity=".4" transform="rotate(20 1325 280)"/><ellipse cx="885" cy="240" rx="65" ry="12" fill="url(#glow)" opacity=".4" transform="rotate(-10 885 240)"/>');
  o.push(`<path d="${curve(front)}${curve(low, 'L')}Z" fill="#08392a"/>`);
  const bore = curve(inTop) + curve(inLow, 'L') + 'Z';
  o.push(`<clipPath id="bore"><path d="${bore}"/></clipPath><path d="${bore}" fill="url(#inner)"/><g clip-path="url(#bore)">`);
  [870, 888, 911, 945, 980, 1020, 1058, 1078, 1098, 1115, 1133, 1170, 1208, 1245, 1277, 1304, 1322].forEach(x => o.push(path(`M${x} 265L${x - 7} 355`, 'wire')));
  o.push(path(curve([[935, 270], [1000, 283], [1060, 292], [1133, 298], [1200, 300], [1250, 299], [1290, 303]]), 'wire'), path(curve([[868, 283], [900, 296], [957, 308], [1060, 326], [1133, 332], [1200, 334], [1270, 331], [1330, 322]]), 'wire'));
  o.push('</g><text x="1053" y="319" class="stamp" transform="rotate(4 1053 319)">J18k</text>');
  o.push(path(curve([[895, 274], [957, 290], [1023, 303], [1090, 311.700], [1133, 315], [1200, 316.700], [1250, 314.500], [1297, 310]]), 'red'), path('M1097 277L1133 280', 'red'));

  const mid = (a, b, t) => a.map((p, i) => [p[0] + (b[i][0] - p[0]) * t, p[1] + (b[i][1] - p[1]) * t]);
  o.push(path(curve(mid(front, inTop, 0.5)), 'wire'), path(curve(mid(low, inLow, 0.5)), 'wire'));
  const cross = (a, b) => a.forEach((p, i) => o.push(line(...p, ...b[i], 'wire')));
  cross(front, inTop); cross(low, inLow);

  [[847, 186, 832, 223, 839, 268], [882, 177, 870, 217, 873, 263], [928, 170, 915, 213, 918, 260], [983, 168, 974, 213, 975, 260], [1045, 169, 1038, 213, 1037, 263], [1106, 172, 1101, 220, 1098, 273], [1168, 180, 1168, 223, 1160, 275], [1228, 189, 1232, 233, 1221, 282], [1283, 202, 1288, 243, 1277, 291], [1329, 217, 1335, 257, 1323, 304], [1361, 230, 1370, 267, 1355, 313]].forEach(([a, b, c, d, e, f]) => o.push(path(curve([[a, b], [c, d], [e, f]]), 'wire')));
  o.push(path(curve([[810, 240], [830, 226], [871, 217], [919, 213], [991, 211], [1060, 214], [1145, 222], [1213, 231], [1284, 244], [1331, 257], [1380, 279]]), 'wire'));
  o.push(path(curve(top), 'edge'), path(curve(low), 'edge'), path(curve(front), 'edge'), path(bore, 'edge'), path('M1097 278L1090.500 349', 'gold'));

  [[809.500, 243, 1.500, 10], [821, 230, 4, 14, 8], [849.700, 221, 6.500, 15, 12], [893.700, 214.300, 10, 15.500, 15], [953.700, 211.700, 12.500, 16, 12], [1024.700, 212.300, 14.500, 16], [1102.300, 217.700, 16, 16.500], [1180, 226, 15, 16], [1250.700, 237.700, 13, 16, -12], [1309.300, 250.700, 10, 15.500, -10], [1352.700, 265, 6.500, 15, -6], [1379.300, 278.700, 3.500, 13.500], [1389, 290.700, 1, 9]].forEach(g => o.push(gem(g)));
  [[831.700, 225.700, 4, 10, 6], [871.700, 216.700, 6, 10.500, 6], [919, 212.700, 8.500, 10.500], [991.300, 211.300, 10, 11], [1059.700, 214.300, 11, 11], [1145.300, 221.700, 11, 11], [1213.300, 231, 10, 10.500], [1284.300, 244.300, 8.500, 10.500], [1331, 256.700, 6.500, 10], [1368.700, 272, 3, 10]].forEach(h => o.push(hole(h, 1)));
  [[841.300, 200, 4.500, 10, 26], [871.300, 193.300, 6, 10, 26], [932, 187.300, 8.500, 10, 30], [986.300, 186, 10, 10], [1072.300, 188.700, 11, 10], [1137.300, 194.700, 11, 10], [1222.700, 206.700, 10.500, 10], [1276.700, 217.300, 8, 10, -26], [1335.300, 234.300, 5.500, 10, -20], [1364.300, 246.700, 3.500, 10, -16],
   [813, 235, 2, 8], [813, 258, 2, 9], [835.700, 248.700, 5, 11, -8], [866, 243, 6.500, 11, -5], [926.300, 238.300, 9, 11], [981, 237.700, 10.500, 11], [1067.700, 241.700, 11.500, 11.500], [1132.300, 247.300, 11.500, 11.500], [1218.700, 258.300, 10.500, 11], [1273.300, 268.700, 8.500, 10.500, 10], [1332.300, 284, 6.500, 10.500, 12], [1361.300, 295.300, 5, 10, 12], [1383, 308, 3, 10, 12]].forEach((h, i) => o.push(hole(h, i % 2 * 2)));
  o.push(path('M772 389L769 418L800 421', 'icon-axis'), '<text x="772" y="391" class="axis-name">y</text><text x="770" y="414" class="axis-name">z</text><text x="800" y="422" class="axis-name">x</text>');
  put('v-persp', o);
}
```
